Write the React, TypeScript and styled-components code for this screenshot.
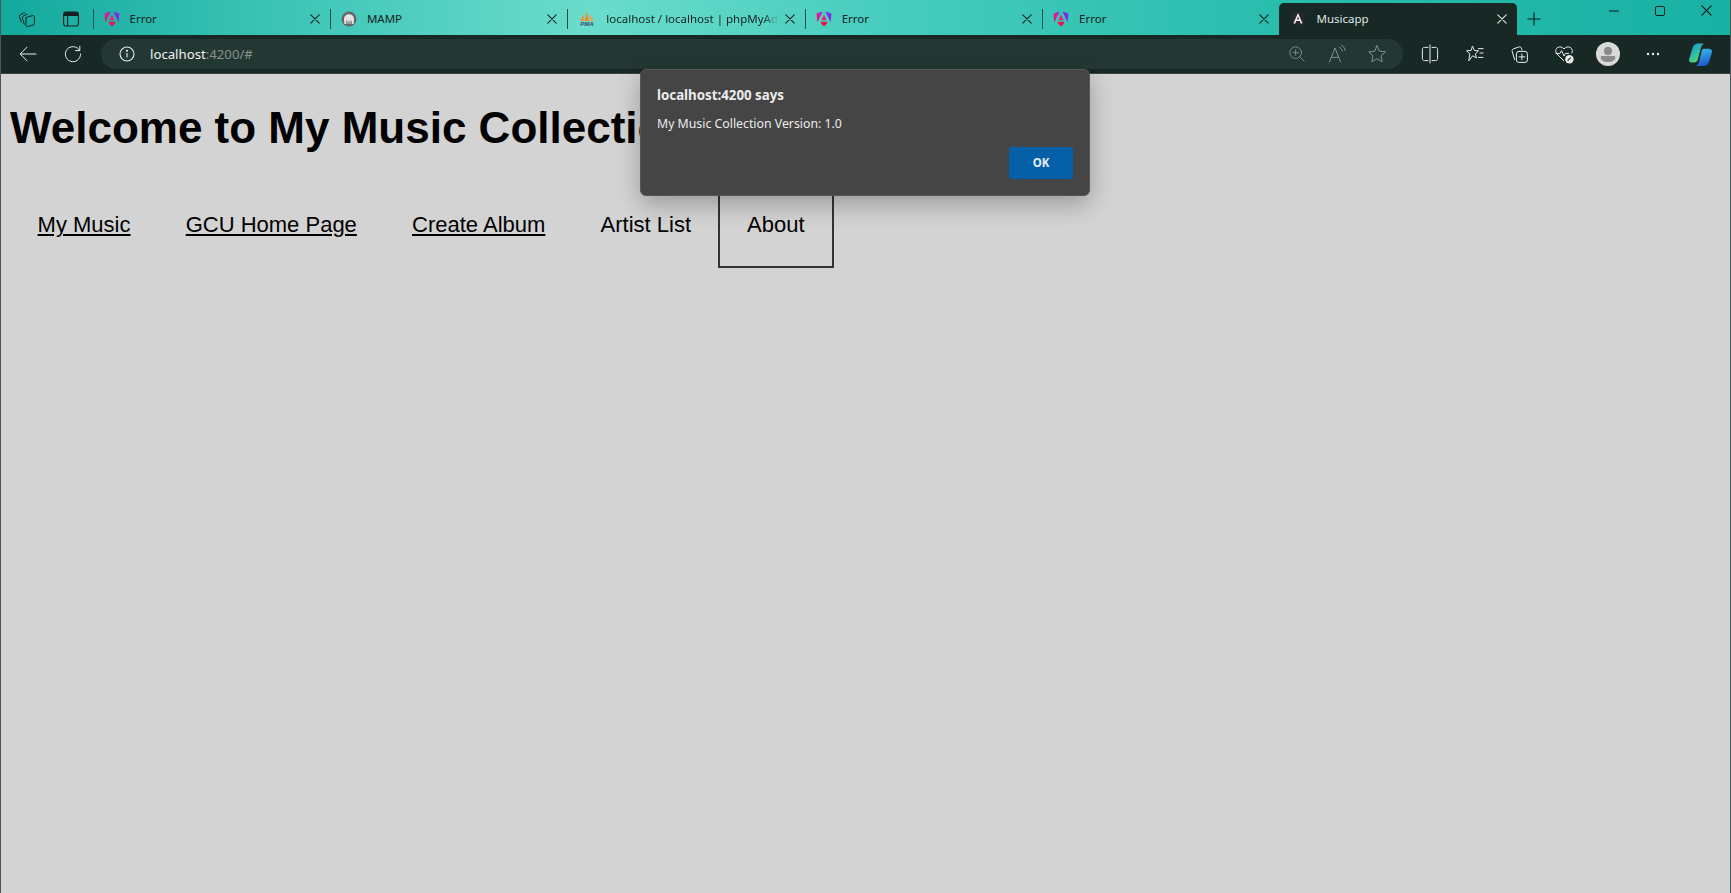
import React from "react"
import styled, { createGlobalStyle } from "styled-components"

const GlobalStyle = createGlobalStyle`
  html, body {
    margin: 0;
    padding: 0;
    height: 100%;
    overflow: hidden;
    background: #d3d3d3;
  }
`

const Shell = styled.div`
  border-left: 1px solid #47575a;
  border-right: 1px solid #47575a;
  display: flex;
  flex-direction: column;
  height: 100vh;
  position: relative;
  box-sizing: border-box;
  font-family: "Noto Sans", "Open Sans", sans-serif;
`

const TabStrip = styled.div`
  align-items: flex-start;
  background: linear-gradient(90deg, #13a99d 0%, #3cc4b6 16%, #6adccb 34%, #45ccbd 52%, #2bbdae 72%, #18b1a4 100%);
  display: flex;
  flex: 0 0 35px;
  height: 35px;
  padding-top: 3px;
  box-sizing: border-box;
`

const StripButtons = styled.div`
  align-items: center;
  display: flex;
  flex: 0 0 91.5px;
  gap: 27px;
  height: 32px;
  padding-left: 17px;
  box-sizing: border-box;
`

const Tab = styled.div<{ $active?: boolean }>`
  align-items: center;
  background: ${({ $active }) => ($active ? "#182825" : "transparent")};
  border-radius: ${({ $active }) => ($active ? "5px 5px 0 0" : "0")};
  box-sizing: border-box;
  color: ${({ $active }) => ($active ? "#dfe6e4" : "#14211f")};
  display: flex;
  flex: 0 0 237.4px;
  font-size: 11.5px;
  height: 32px;
  min-width: 0;
  padding-right: 10px;
`

const Separator = styled.span<{ $hidden?: boolean }>`
  background: ${({ $hidden }) => ($hidden ? "transparent" : "#17514c")};
  flex: 0 0 1px;
  height: 20px;
  margin: 0 10px 0 0;
`

const TabTitle = styled.span<{ $fade?: boolean }>`
  flex: 1;
  margin: -1px 6px 0 10px;
  min-width: 0;
  overflow: hidden;
  white-space: nowrap;
  ${({ $fade }) =>
    $fade
      ? `mask-image: linear-gradient(90deg, #000 90%, transparent 100%);`
      : null};
`

const NewTab = styled.div`
  align-items: center;
  display: flex;
  height: 32px;
  justify-content: center;
  margin-left: 3px;
  width: 28px;
`

const WindowControls = styled.div`
  display: flex;
  margin-left: auto;
  margin-top: -3px;
  padding-right: 1px;
`

const WindowButton = styled.div`
  align-items: center;
  display: flex;
  height: 21px;
  justify-content: center;
  width: 46px;
`

const Toolbar = styled.div`
  align-items: center;
  background: #182825;
  border-bottom: 1px solid #3f4443;
  box-sizing: border-box;
  display: flex;
  flex: 0 0 39px;
  height: 39px;
  padding-left: 5px;
`

const ToolButton = styled.div<{ $wide?: boolean }>`
  align-items: center;
  display: flex;
  flex: 0 0 44.5px;
  height: 38px;
  justify-content: center;
  margin-left: ${({ $wide }) => ($wide ? "3px" : "0")};
`

const AddressBar = styled.div`
  align-items: center;
  background: #243833;
  border-radius: 15px;
  box-sizing: border-box;
  display: flex;
  flex: 0 0 1302px;
  height: 30px;
  margin: 0 5px 0 6px;
  padding: 0 16px 0 18px;
`

const Url = styled.span`
  color: #f0f3f2;
  flex: 1;
  font-size: 13.2px;
  margin-left: 15px;
  margin-top: -1px;
`

const UrlRest = styled.span`
  color: #87918f;
`

const BarIcons = styled.div`
  align-items: center;
  display: flex;
  gap: 20px;
  svg:first-child {
    margin-right: 1px;
  }
`

const Avatar = styled.div`
  align-items: center;
  background: #d9d9d9;
  border-radius: 50%;
  display: flex;
  height: 24px;
  justify-content: center;
  overflow: hidden;
  width: 24px;
`

const Page = styled.main`
  background: #d3d3d3;
  flex: 1;
  font-family: "Liberation Sans", Arial, sans-serif;
`

const Heading = styled.h1`
  color: #000;
  font-size: 44px;
  font-weight: 700;
  line-height: 52px;
  margin: 28px 9px 28px;
`

const NavList = styled.ul`
  display: flex;
  list-style: none;
  margin: 0;
  padding: 0 0 0 9px;
`

const NavLink = styled.a<{ $plain?: boolean; $boxed?: boolean }>`
  border: ${({ $boxed }) => ($boxed ? "2px solid #333" : "0")};
  color: #000;
  display: block;
  font-size: 22px;
  line-height: 26px;
  margin-left: ${({ $boxed }) => ($boxed ? "-1px" : "0")};
  padding: ${({ $boxed }) => ($boxed ? "28px 27.5px" : "30px 27.6px")};
  text-decoration: ${({ $plain }) => ($plain ? "none" : "underline")};
`

const AlertBox = styled.div`
  background: #454545;
  border: 1px solid #565656;
  border-radius: 6px;
  box-shadow: 0 8px 24px rgba(0, 0, 0, 0.28);
  box-sizing: border-box;
  color: #ececec;
  display: flex;
  flex-direction: column;
  font-size: 12.3px;
  height: 127px;
  left: 639px;
  padding: 16px 16px 16px;
  position: absolute;
  top: 69px;
  width: 450px;
`

const AlertTitle = styled.div`
  font-size: 13.3px;
  font-weight: 700;
  line-height: 18px;
`

const AlertMessage = styled.div`
  line-height: 18px;
  margin-top: 11px;
`

const AlertActions = styled.div`
  display: flex;
  justify-content: flex-end;
  margin-top: auto;
`

const OkButton = styled.button`
  background: #0560a8;
  border: 0;
  border-radius: 2px;
  color: #e6eef5;
  font-family: inherit;
  font-size: 11.5px;
  font-weight: 700;
  height: 32px;
  padding: 0 0 2px;
  width: 64px;
`

type GlyphProps = { color?: string; size?: number }

const Line: React.FC<GlyphProps & { children: React.ReactNode }> = ({ color = "#e8eceb", size = 20, children }) => (
  <svg width={size} height={size} viewBox="0 0 20 20" fill="none" stroke={color} strokeWidth="1" strokeLinecap="round" strokeLinejoin="round">
    {children}
  </svg>
)

const AngularLogo: React.FC<{ id: string }> = ({ id }) => (
  <svg width="16" height="16" viewBox="0 0 16 16">
    <defs>
      <linearGradient id={id} x1="0" y1="1" x2="1" y2="0">
        <stop offset="0" stopColor="#e40035" />
        <stop offset="0.5" stopColor="#f0149c" />
        <stop offset="1" stopColor="#7a22e8" />
      </linearGradient>
    </defs>
    <path d="M6.6 0.4 L0.6 2.6 L1.4 11.2Z" fill={`url(#${id})`} />
    <path d="M9.4 0.4 L15.4 2.6 L14.6 11.2Z" fill="#7c2be6" />
    <path d="M8 3.4 L10.6 9.2 H5.4Z" fill="#ef1f7e" />
    <path d="M4.6 10.8 H11.4 L10.6 13 L8 15.6 L5.4 13Z" fill="#e8124f" />
  </svg>
)

const AngularDark = () => (
  <svg width="16" height="16" viewBox="0 0 16 16">
    <path d="M8 0 L15 2.5 L14 12 L8 16 L2 12 L1 2.5Z" fill="#26282b" />
    <path d="M8 2 L12.6 12.4 H10.7 L9.8 10 H6.2 L5.3 12.4 H3.4Z M8 5.6 L6.9 8.4 H9.1Z" fill="#f3f3f3" fillRule="evenodd" />
  </svg>
)

const MampLogo = () => (
  <svg width="16" height="16" viewBox="0 0 16 16">
    <circle cx="8" cy="8" r="7.5" fill="#666" />
    <path d="M3 8.6 C2.8 5 5.6 3.2 8 3.2 C10.4 3.2 13.2 5 13 8.6 L12.6 13 H10.8 L10.4 9.4 H9.6 L9.4 13 H8.6 L8.3 9.4 H7.7 L7.4 13 H6.6 L6.4 9.4 H5.6 L5.2 13 H3.4Z" fill="#e4e4e4" />
  </svg>
)

const PmaLogo = () => (
  <svg width="18" height="16" viewBox="0 0 18 16">
    <path d="M2 10 L5.5 3 L6 10Z" fill="#e8973a" />
    <path d="M6.6 10 L9 0.6 L10.4 10Z" fill="#ee8a23" />
    <path d="M11 10 L11.6 2.6 L15.6 10Z" fill="#f0a54e" />
    <text x="9" y="15.4" textAnchor="middle" fontFamily="Liberation Sans" fontSize="6" fontWeight="700" fontStyle="italic" fill="#3f4a78">
      PMA
    </text>
  </svg>
)

const CloseGlyph: React.FC<GlyphProps> = ({ color = "#14211f", size = 10 }) => (
  <svg width={size} height={size} viewBox="0 0 10 10" stroke={color} strokeWidth="1.1" strokeLinecap="round" style={{ flex: "none" }}>
    <path d="M0.8 0.8 L9.2 9.2 M9.2 0.8 L0.8 9.2" />
  </svg>
)

const Workspaces = () => (
  <svg width="18" height="18" viewBox="0 0 18 18" fill="none" stroke="#14211f" strokeWidth="1" strokeLinejoin="round">
    <path d="M3.4 12.5 L1.4 6.6 C1.2 5.9 1.5 5.4 2.1 5.1 L5.4 3 C6 2.6 6.6 2.8 7 3.3" />
    <path d="M6.4 14.6 L4.3 8 C4.1 7.3 4.4 6.8 5 6.4 L8 4.4 C8.6 4 9.3 4.2 9.7 4.8" />
    <path d="M8 7.4 L14.6 5.6 C15.6 5.4 16.4 6 16.4 7 V13.6 C16.4 14.2 16.1 14.7 15.5 14.9 L9.7 16.6 C8.8 16.8 8 16.2 8 15.2Z" />
  </svg>
)

const VerticalTabs = () => (
  <svg width="16" height="16" viewBox="0 0 16 16" fill="none">
    <rect x="0.6" y="1" width="14.8" height="14" rx="2.4" stroke="#14211f" strokeWidth="1.1" />
    <path d="M1 3.4 C1 2 2 1 3 1 H13 C14.2 1 15 2 15 3.4 V5 H1Z" fill="#14211f" />
    <path d="M4.6 5 V15" stroke="#14211f" strokeWidth="1.1" />
  </svg>
)

const tabs = [
  { title: "Error", logo: <AngularLogo id="ng-a" /> },
  { title: "MAMP", logo: <MampLogo /> },
  { title: "localhost / localhost | phpMyAdmin 5.1.1", logo: <PmaLogo />, fade: true },
  { title: "Error", logo: <AngularLogo id="ng-b" /> },
  { title: "Error", logo: <AngularLogo id="ng-c" /> },
]

const App: React.FC = () => (
  <Shell>
    <GlobalStyle />
    <TabStrip>
      <StripButtons>
        <Workspaces />
        <VerticalTabs />
      </StripButtons>
      {tabs.map((tab, i) => (
        <Tab key={i}>
          <Separator />
          {tab.logo}
          <TabTitle $fade={tab.fade}>{tab.title}</TabTitle>
          <CloseGlyph />
        </Tab>
      ))}
      <Tab $active>
        <Separator $hidden />
        <AngularDark />
        <TabTitle>Musicapp</TabTitle>
        <CloseGlyph color="#dfe6e4" />
      </Tab>
      <NewTab>
        <svg width="14" height="14" viewBox="0 0 14 14" stroke="#0f1b19" strokeWidth="1.1">
          <path d="M7 0.5 V13.5 M0.5 7 H13.5" />
        </svg>
      </NewTab>
      <WindowControls>
        <WindowButton>
          <svg width="10" height="10" viewBox="0 0 10 10" stroke="#0f1b19" strokeWidth="1">
            <path d="M0 5 H10" />
          </svg>
        </WindowButton>
        <WindowButton>
          <svg width="10" height="10" viewBox="0 0 10 10" fill="none" stroke="#0f1b19" strokeWidth="1">
            <rect x="0.5" y="0.5" width="9" height="9" rx="1.4" />
          </svg>
        </WindowButton>
        <WindowButton>
          <CloseGlyph color="#0f1b19" size={11} />
        </WindowButton>
      </WindowControls>
    </TabStrip>
    <Toolbar>
      <ToolButton>
        <Line>
          <path d="M18 10 H2.4 M9 3.2 L2.2 10 L9 16.8" />
        </Line>
      </ToolButton>
      <ToolButton>
        <Line>
          <path d="M16.6 6.4 A7.6 7.6 0 1 0 17.6 10" />
          <path d="M16.8 2.2 V6.6 H12.4" />
        </Line>
      </ToolButton>
      <AddressBar>
        <svg width="16" height="16" viewBox="0 0 16 16" fill="none" stroke="#e8eceb" strokeWidth="1.1">
          <circle cx="8" cy="8" r="7" />
          <path d="M8 7 V11.6" />
          <circle cx="8" cy="4.8" r="0.5" fill="#e8eceb" />
        </svg>
        <Url>
          localhost<UrlRest>:4200/#</UrlRest>
        </Url>
        <BarIcons>
          <Line color="#85908d" size={18}>
            <circle cx="8.5" cy="8.5" r="6.5" />
            <path d="M13.4 13.4 L18 18 M8.5 5.5 V11.5 M5.5 8.5 H11.5" />
          </Line>
          <Line color="#85908d" size={20}>
            <path d="M2.4 18 L8 4 L13.6 18 M4.4 13.4 H11.6" />
            <path d="M12.2 3.4 C14 4 15 5.4 15.2 7.4 M14.4 1.4 C16.6 2.2 18 4 18.2 6.6" />
          </Line>
          <Line color="#85908d" size={20}>
            <path d="M10 1.8 L12.5 7.2 L18.4 7.9 L14 11.9 L15.2 17.8 L10 14.8 L4.8 17.8 L6 11.9 L1.6 7.9 L7.5 7.2Z" />
          </Line>
        </BarIcons>
      </AddressBar>
      <ToolButton>
        <Line>
          <path d="M10 1 V19 M8 3.4 H4.4 C3.2 3.4 2.4 4.2 2.4 5.4 V14.6 C2.4 15.8 3.2 16.6 4.4 16.6 H8 M12 3.4 H15.6 C16.8 3.4 17.6 4.2 17.6 5.4 V14.6 C17.6 15.8 16.8 16.6 15.6 16.6 H12" />
        </Line>
      </ToolButton>
      <ToolButton>
        <Line>
          <path d="M7.6 2.4 L9.4 6.4 L13.6 6.8 L10.4 9.8 L11.4 14 L7.6 11.8 L3.8 16.8 L4.8 9.8 L1.6 6.8 L5.8 6.4Z" />
          <path d="M13.4 4.6 H18 M15 9 H18 M13.4 13.4 H18" />
        </Line>
      </ToolButton>
      <ToolButton>
        <Line>
          <path d="M5.6 15.6 L3.2 7.4 C2.8 6.2 3.4 5.2 4.6 4.8 L9.6 3 C10.8 2.6 11.8 3 12.4 4.2 L13 6" />
          <rect x="7.4" y="7.4" width="11" height="11" rx="2.4" />
          <path d="M12.9 10 V15.8 M10 12.9 H15.8" />
        </Line>
      </ToolButton>
      <ToolButton>
        <svg width="20" height="20" viewBox="0 0 20 20" fill="none" stroke="#e8eceb" strokeWidth="1" strokeLinejoin="round">
          <path d="M10 17 L3 10 C1 7.8 1.4 4.6 3.8 3.4 C6 2.4 8.6 3 10 5 C11.4 3 14 2.4 16.2 3.4 C18.4 4.6 19 7.4 17.6 9.4" />
          <path d="M1.6 9.4 H6 L7.6 6.6 L10 12 L11.6 9.4 H15" />
          <circle cx="15.4" cy="15.2" r="4.2" fill="#e8eceb" stroke="none" />
          <path d="M13.6 16.6 L16.8 13.6" stroke="#182825" strokeWidth="1.2" />
        </svg>
      </ToolButton>
      <ToolButton>
        <Avatar>
          <svg width="24" height="24" viewBox="0 0 24 24" fill="#8a8a8a">
            <circle cx="12" cy="9" r="4.2" />
            <path d="M4.6 15.4 C4.6 14.4 5.4 14 6.4 14 H17.6 C18.6 14 19.4 14.4 19.4 15.4 C19.4 18 16 20 12 20 C8 20 4.6 18 4.6 15.4Z" />
          </svg>
        </Avatar>
      </ToolButton>
      <ToolButton>
        <svg width="14" height="4" viewBox="0 0 14 4" fill="#e8eceb">
          <circle cx="2" cy="2" r="1.2" />
          <circle cx="7" cy="2" r="1.2" />
          <circle cx="12" cy="2" r="1.2" />
        </svg>
      </ToolButton>
      <ToolButton $wide>
        <svg width="25" height="25" viewBox="0 0 24 24">
          <defs>
            <linearGradient id="cp-left" x1="0" y1="0" x2="0.7" y2="1">
              <stop offset="0" stopColor="#1d8fd8" />
              <stop offset="0.6" stopColor="#2cc4a0" />
              <stop offset="1" stopColor="#7fd34e" />
            </linearGradient>
            <linearGradient id="cp-right" x1="0.4" y1="0" x2="0.6" y2="1">
              <stop offset="0" stopColor="#37b6ea" />
              <stop offset="1" stopColor="#1a55c8" />
            </linearGradient>
          </defs>
          <path d="M9.6 1.4 H16 C14 2 13 3.4 12.4 5.4 L9.4 16.8 C9 18.6 7.6 19.6 5.8 19.6 H3.6 C1.4 19.6 0.6 18 1.2 16 L4.6 5 C5.4 2.6 7.2 1.4 9.6 1.4Z" fill="url(#cp-left)" />
          <path d="M14.6 6.4 H19.6 C22 6.4 23.6 7.6 23 10 L20 19.4 C19.2 21.8 17.4 23 15 23 H6.6 C9 22.6 10 21 10.6 19 L13 9 C13.2 8 13.8 7 14.6 6.4Z" fill="url(#cp-right)" />
        </svg>
      </ToolButton>
    </Toolbar>
    <Page>
      <Heading>Welcome to My Music Collection</Heading>
      <nav>
        <NavList>
          <li>
            <NavLink href="#">My Music</NavLink>
          </li>
          <li>
            <NavLink href="#">GCU Home Page</NavLink>
          </li>
          <li>
            <NavLink href="#">Create Album</NavLink>
          </li>
          <li>
            <NavLink $plain>Artist List</NavLink>
          </li>
          <li>
            <NavLink $plain $boxed>
              About
            </NavLink>
          </li>
        </NavList>
      </nav>
    </Page>
    <AlertBox>
      <AlertTitle>localhost:4200 says</AlertTitle>
      <AlertMessage>My Music Collection Version: 1.0</AlertMessage>
      <AlertActions>
        <OkButton>OK</OkButton>
      </AlertActions>
    </AlertBox>
  </Shell>
)

export default App
